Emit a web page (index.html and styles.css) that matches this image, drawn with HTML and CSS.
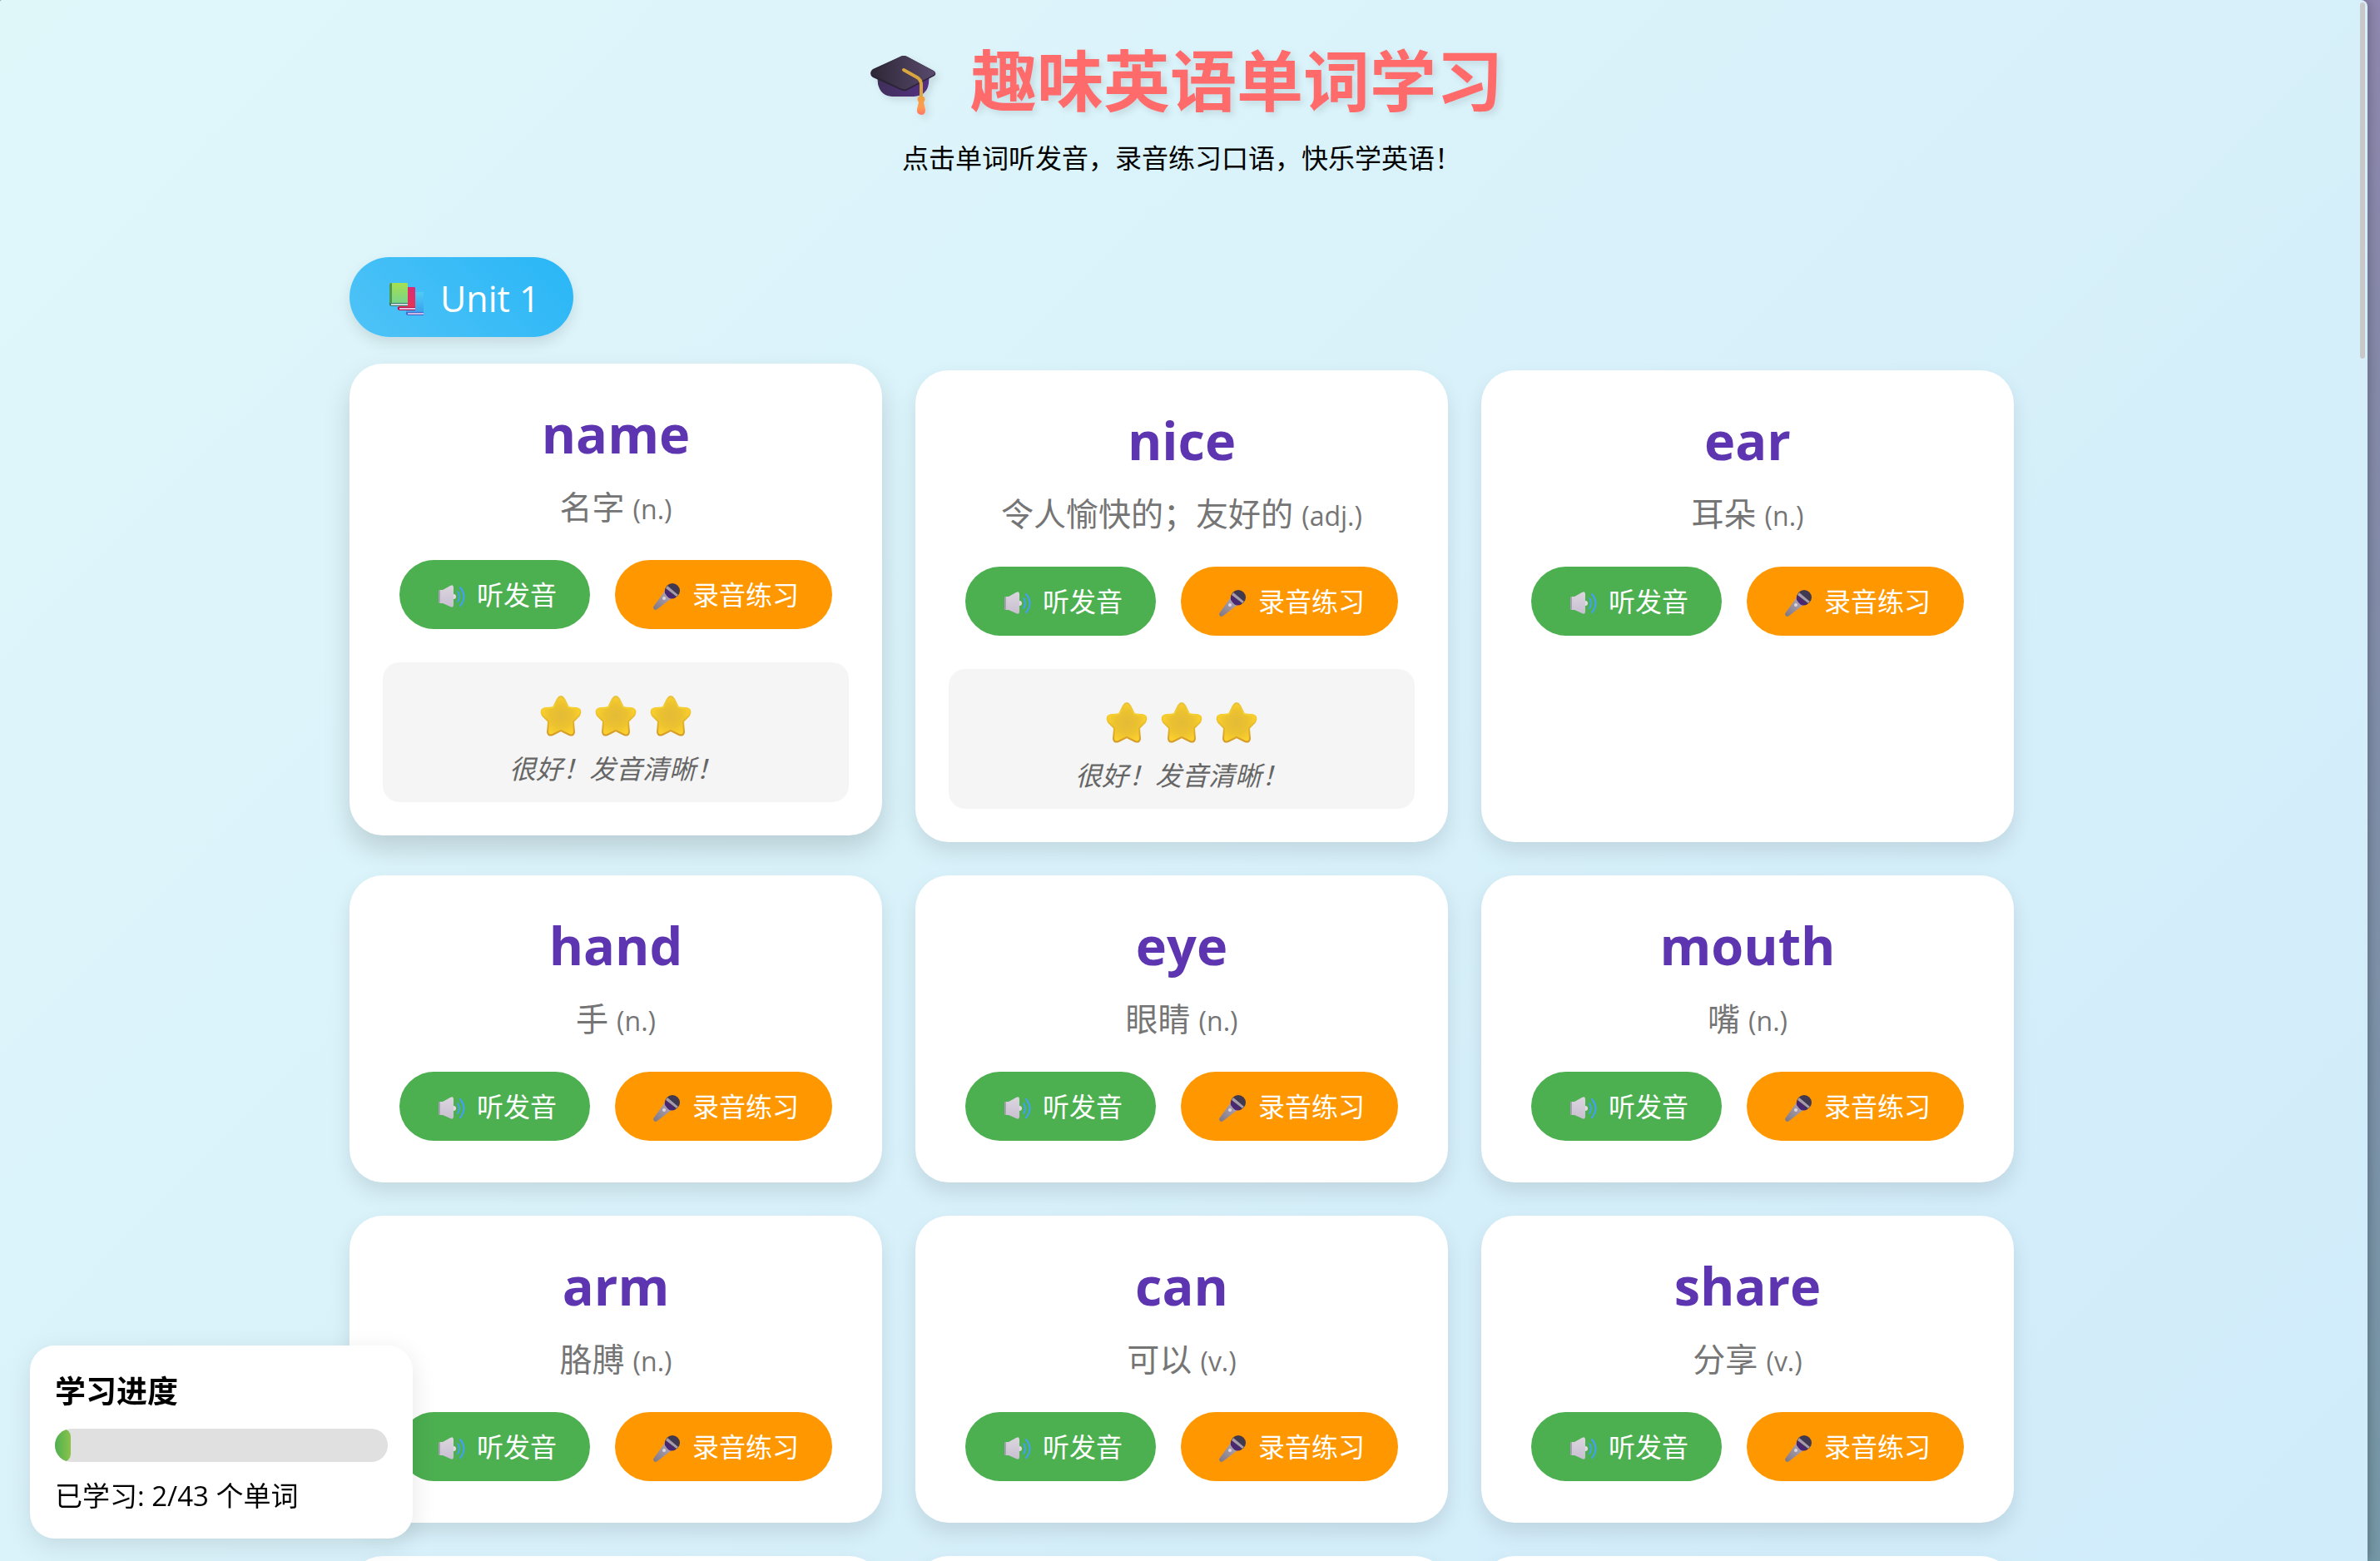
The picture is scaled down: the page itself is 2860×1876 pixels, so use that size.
FILE: index.html
```html
<!DOCTYPE html>
<html lang="zh-CN">
<head>
<meta charset="utf-8">
<title>趣味英语单词学习</title>
<link rel="stylesheet" href="styles.css">
</head>
<body>
<svg class="defs" width="0" height="0" aria-hidden="true">
  <defs>
    <linearGradient id="capTop" x1="0" y1="0" x2="1" y2="0"><stop offset="0" stop-color="#2d2736"/><stop offset="1" stop-color="#594a6c"/></linearGradient>
    <linearGradient id="capBase" x1="0" y1="0" x2="1" y2="0"><stop offset="0" stop-color="#3f3059"/><stop offset="1" stop-color="#553085"/></linearGradient>
    <linearGradient id="tassel" x1="0" y1="0" x2="0" y2="1"><stop offset="0" stop-color="#f0a040"/><stop offset=".6" stop-color="#ff9a50"/><stop offset="1" stop-color="#ff7468"/></linearGradient>
    <linearGradient id="bookGreen" x1="0" y1="0" x2="0" y2="1"><stop offset="0" stop-color="#a6e04f"/><stop offset="1" stop-color="#77d48c"/></linearGradient>
    <linearGradient id="bookRed" x1="0" y1="0" x2="0" y2="1"><stop offset="0" stop-color="#d92c78"/><stop offset="1" stop-color="#ea3350"/></linearGradient>
    <linearGradient id="bookBlue" x1="0" y1="0" x2="0" y2="1"><stop offset="0" stop-color="#4fcbf5"/><stop offset="1" stop-color="#3a9cea"/></linearGradient>
    <linearGradient id="cone" x1="0" y1="0" x2="0" y2="1"><stop offset="0" stop-color="#dcd6e0"/><stop offset="1" stop-color="#c8bfd0"/></linearGradient>
    <linearGradient id="micBody" x1="0" y1="1" x2="1" y2="0"><stop offset="0" stop-color="#7f7684"/><stop offset="1" stop-color="#b5abba"/></linearGradient>
    <radialGradient id="starFill"><stop offset="0" stop-color="#e3bb36"/><stop offset=".6" stop-color="#ecc230"/><stop offset="1" stop-color="#fbd02c"/></radialGradient>
    <linearGradient id="starEdge" x1="0" y1="0" x2="0" y2="1"><stop offset="0" stop-color="#e9c13a"/><stop offset=".3" stop-color="#f5cf30"/><stop offset="1" stop-color="#d39a28"/></linearGradient>
  </defs>
  <symbol id="cap" viewBox="0 0 110 90">
    <g transform="translate(0 1)">
      <path d="M20 36 L21 49 Q24 63 38 64 H64 Q80 63 82 48 L83 34Z" fill="url(#capBase)"/>
      <path d="M12 36 Q12 33 15 31 L48 16 Q52 14 56 16 L88 33 Q92 36 89 39 L55 57 Q52 58 48 56 L15 41 Q12 39 12 36Z" fill="#2b2436"/>
      <path d="M13 34 L48 16 Q52 14 56 16 L89 34 Q91 36 88 38 L55 55 Q52 56 48 54 L15 38 Q12 36 13 34Z" fill="url(#capTop)"/>
      <path d="M52 32 L68 41 Q73 44 73 50 V66" fill="none" stroke="#dba63e" stroke-width="4" stroke-linecap="round"/>
      <path d="M70 64 H76 Q79 67 76 71 L78 80 Q78 86 73 86 Q67 85 68 79 L70 71 Q67 67 70 64Z" fill="url(#tassel)"/>
    </g>
  </symbol>
  <symbol id="books" viewBox="0 0 60 44">
    <path d="M28 14 H49 V41 H30 L28 38Z" fill="url(#bookBlue)"/><path d="M28 38 H49 V42 H30 Q27 41 28 38Z" fill="#416bcb"/><path d="M30 39 H49 V41 H30Z" fill="#cbb6e6"/>
    <path d="M18 8 H38 Q39 8 39 9 V35 H19Z" fill="url(#bookRed)"/><path d="M18 32 H39 V36 H20 Q17 35 18 32Z" fill="#b51554"/><path d="M20 33 H39 V35 H20Z" fill="#e2bfe0"/>
    <path d="M8 5 Q8 3 10 3 H29 Q30 3 30 5 V28 H8Z" fill="url(#bookGreen)"/><path d="M8 5 Q8 3 11 3 V28 L8 29Z" fill="#4d9b4d"/><path d="M8 27 H30 V31 H10 Q7 30 8 27Z" fill="#39806a"/><path d="M10 28 H30 V30 H10Z" fill="#ccd5de"/>
  </symbol>
  <symbol id="speaker" viewBox="0 0 44 40">
    <circle cx="25" cy="22" r="3" fill="#e2dce6"/>
    <path d="M7 16 Q7 14 9 14 H12 L21 9 Q25 7 25 11 V32 Q25 36 21 34 L12 30 H9 Q7 30 7 28Z" fill="url(#cone)"/>
    <path d="M7 16 Q7 14 9 14 V30 Q7 30 7 28Z" fill="#a99fb2"/>
    <path d="M30 16 Q34 22 30 28 M33 11 Q42 22 33 33" fill="none" stroke="#42a0fa" stroke-width="2" stroke-linecap="round"/>
  </symbol>
  <symbol id="mic" viewBox="0 0 44 40">
    <g transform="translate(-1 4)">
      <path d="M21 11 L29 20 L12 33 Q9 35 8 33 Q6 31 8 29Z" fill="url(#micBody)"/>
      <circle cx="30" cy="11" r="9" fill="#413950"/>
      <path d="M22 8 L34 19 Q29 22 25 19 L21 14 Q20 11 22 8Z" fill="#4a2871"/>
      <path d="M24 5 L37 16 L35 18 L22 8Z" fill="#a69cab"/>
      <circle cx="20" cy="20" r="2" fill="#ddd5e0"/>
    </g>
  </symbol>
  <symbol id="star" viewBox="0 0 66 52">
    <path d="M29 5 Q33 -1 37 5 L42 15 Q46 16 52 16 Q59 18 55 25 L48 32 L49 45 Q48 50 43 48 L33 43 L23 48 Q18 50 17 45 L18 32 L11 25 Q7 18 14 16 Q20 16 24 15Z" fill="url(#starFill)" stroke="url(#starEdge)" stroke-width="2" stroke-linejoin="round"/>
  </symbol>
</svg>

<main class="pane">
  <header class="header">
    <h1 class="title"><svg class="icon-cap" aria-hidden="true"><use href="#cap"/></svg> 趣味英语单词学习</h1>
    <p class="subtitle">点击单词听发音，录音练习口语，快乐学英语！</p>
  </header>

  <section class="unit">
    <h2 class="unit-title"><svg class="icon-books" aria-hidden="true"><use href="#books"/></svg> Unit 1</h2>
    <div class="grid" id="grid"></div>
  </section>
  <div class="scroll-thumb"></div>
</main>

<aside class="progress">
  <h3 class="progress-title">学习进度</h3>
  <div class="bar"><div class="bar-fill" style="width:4.65%"></div></div>
  <p class="progress-text">已学习: 2/43 个单词</p>
</aside>
<script src="words.js"></script>
</body>
</html>
```
FILE: words.js
```js
const words = [
  { word: "name", meaning: "名字", pos: "n.", stars: 3, hover: true },
  { word: "nice", meaning: "令人愉快的；友好的", pos: "adj.", stars: 3 },
  { word: "ear", meaning: "耳朵", pos: "n." },
  { word: "hand", meaning: "手", pos: "n." },
  { word: "eye", meaning: "眼睛", pos: "n." },
  { word: "mouth", meaning: "嘴", pos: "n." },
  { word: "arm", meaning: "胳膊", pos: "n." },
  { word: "can", meaning: "可以", pos: "v." },
  { word: "share", meaning: "分享", pos: "v." },
];

const star = '<svg class="icon-star" aria-hidden="true"><use href="#star"/></svg>';

const feedback = (w) => w.stars
  ? `<div class="feedback"><div class="stars">${star.repeat(w.stars)}</div><p class="comment">很好！发音清晰！</p></div>`
  : "";

const card = (w) => `
  <article class="card${w.hover ? " card-raised" : ""}">
    <h3 class="word">${w.word}</h3>
    <p class="meaning">${w.meaning} <span class="pos">(${w.pos})</span></p>
    <div class="actions">
      <button type="button" class="btn btn-listen"><svg class="icon" aria-hidden="true"><use href="#speaker"/></svg> 听发音</button>
      <button type="button" class="btn btn-record"><svg class="icon" aria-hidden="true"><use href="#mic"/></svg> 录音练习</button>
    </div>
    ${feedback(w)}
  </article>`;

const nextRow = '<article class="card"></article>'.repeat(3);

document.getElementById("grid").innerHTML = words.map(card).join("") + nextRow;
```
FILE: styles.css
```css
* {
  box-sizing: border-box;
  margin: 0;
  padding: 0;
}

body {
  height: 100vh;
  padding-right: 15px;
  overflow: hidden;
  background: linear-gradient(180deg, #9088b0 0%, #868bab 25%, #7699a8 100%);
  font-family: "Open Sans", "Noto Sans CJK SC", sans-serif;
  font-size: 32px;
  color: #000;
}

.defs {
  position: absolute;
}

.pane {
  position: relative;
  height: 100vh;
  padding: 40px 45px 40px 40px;
  overflow: hidden;
  border-radius: 2px 8px 0 0;
  background: linear-gradient(135deg, #e0f7fa, #d0ebfa);
  box-shadow: 0 0 16px rgba(0, 0, 0, 0.3);
}

.header {
  display: flex;
  flex-direction: column;
  align-items: center;
  gap: 16px;
  margin-bottom: 97px;
}

.title {
  display: flex;
  align-items: center;
  gap: 22px;
  font-size: 80px;
  line-height: 112px;
  color: #ff6b6b;
  text-shadow: 4px 4px 8px rgba(0, 0, 0, 0.1);
}

.icon-cap {
  width: 110px;
  height: 90px;
  overflow: visible;
  filter: drop-shadow(4px 4px 4px rgba(0, 0, 0, 0.1));
}

.subtitle {
  line-height: 44px;
}

.unit {
  max-width: 2000px;
  margin: 0 auto;
}

.unit-title {
  display: inline-flex;
  align-items: center;
  gap: 9px;
  margin-bottom: 40px;
  padding: 20px 40px 16px;
  border-radius: 50px;
  background: linear-gradient(45deg, #4fc3f7, #29b6f6);
  box-shadow: 0 8px 16px rgba(0, 0, 0, 0.1);
  font-size: 43px;
  font-weight: 400;
  line-height: 60px;
  color: #fff;
}

.icon-books {
  width: 60px;
  height: 44px;
}

.grid {
  display: grid;
  grid-template-columns: repeat(3, 1fr);
  gap: 40px;
}

.card {
  padding: 40px;
  border-radius: 40px;
  background: #fff;
  box-shadow: 0 12px 24px rgba(0, 0, 0, 0.1);
  text-align: center;
}

.card-raised {
  transform: translateY(-8px);
  box-shadow: 0 16px 32px rgba(0, 0, 0, 0.15);
}

.word {
  margin-bottom: 18px;
  font-size: 63px;
  line-height: 88px;
  color: #5e35b1;
}

.meaning {
  margin-bottom: 35px;
  font-size: 39px;
  line-height: 52px;
  color: #757575;
}

.pos {
  font-size: 32px;
}

.actions {
  display: flex;
  justify-content: center;
  gap: 30px;
  margin-bottom: 10px;
}

.btn {
  display: flex;
  align-items: center;
  gap: 9px;
  padding: 0 40px;
  border: 0;
  border-radius: 50px;
  font: inherit;
  line-height: 83px;
  color: #fff;
  cursor: pointer;
}

.btn-listen {
  background: #4caf50;
}

.btn-record {
  background: #ff9800;
}

.icon {
  width: 44px;
  height: 40px;
}

.feedback {
  margin-top: 40px;
  padding: 30px 20px 18px;
  border-radius: 20px;
  background: #f5f5f5;
}

.stars {
  display: flex;
  justify-content: center;
  padding: 9px 0 15px;
}

.icon-star {
  width: 66px;
  height: 52px;
}

.comment {
  font-style: italic;
  line-height: 44px;
  color: #666;
}

.scroll-thumb {
  position: absolute;
  top: 3px;
  right: 3px;
  width: 6px;
  height: 428px;
  border-radius: 3px;
  background: #c8c8c8;
}

.progress {
  position: fixed;
  left: 36px;
  bottom: 27px;
  width: 460px;
  padding: 28px 30px 30px;
  border-radius: 30px;
  background: #fff;
  box-shadow: 0 8px 30px rgba(0, 0, 0, 0.1);
}

.progress-title {
  margin-bottom: 18px;
  font-size: 37px;
  line-height: 54px;
}

.bar {
  height: 40px;
  margin-bottom: 20px;
  overflow: hidden;
  border-radius: 20px;
  background: #e0e0e0;
}

.bar-fill {
  height: 100%;
  border-radius: 20px;
  background: linear-gradient(90deg, #4caf50, #8bc34a);
}

.progress-text {
  font-size: 33px;
  line-height: 42px;
}
```
